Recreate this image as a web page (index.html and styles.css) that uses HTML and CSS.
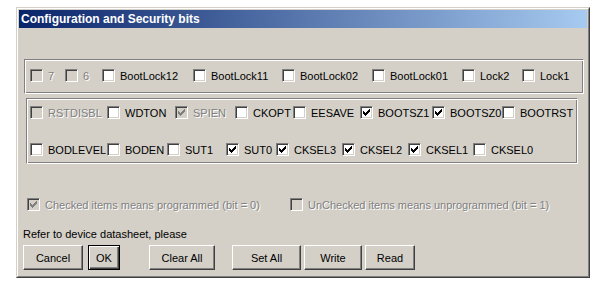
FILE: index.html
```html
<!DOCTYPE html>
<html lang="en">
<head>
    <meta charset="UTF-8">
    <title>Configuration and Security bits</title>
    <link rel="stylesheet" href="styles.css">
</head>
<body>
<div class="window">
  <div class="frame">
    <div class="titlebar">Configuration and Security bits</div>

    <div class="group lockbits">
        <div class="row">
            <label class="item w35 disabled"><span class="box"></span>7</label>
            <label class="item w37 disabled"><span class="box"></span>6</label>
            <label class="item w91"><span class="box"></span>BootLock12</label>
            <label class="item w89"><span class="box"></span>BootLock11</label>
            <label class="item w90"><span class="box"></span>BootLock02</label>
            <label class="item w90"><span class="box"></span>BootLock01</label>
            <label class="item w60"><span class="box"></span>Lock2</label>
            <label class="item"><span class="box"></span>Lock1</label>
        </div>
    </div>

    <div class="group fusebits">
        <div class="row">
            <label class="item w77 disabled"><span class="box"></span>RSTDISBL</label>
            <label class="item w68"><span class="box"></span>WDTON</label>
            <label class="item w60 disabled"><span class="box checked"><svg width="11" height="11" viewBox="0 0 11 11"><path d="M2 4h1v3H2zM3 5h1v3H3zM4 6h1v3H4zM5 5h1v3H5zM6 4h1v3H6zM7 3h1v3H7zM8 2h1v3H8z"/></svg></span>SPIEN</label>
            <label class="item w58"><span class="box"></span>CKOPT</label>
            <label class="item w67"><span class="box"></span>EESAVE</label>
            <label class="item w72"><span class="box checked"><svg width="11" height="11" viewBox="0 0 11 11"><path d="M2 4h1v3H2zM3 5h1v3H3zM4 6h1v3H4zM5 5h1v3H5zM6 4h1v3H6zM7 3h1v3H7zM8 2h1v3H8z"/></svg></span>BOOTSZ1</label>
            <label class="item w70"><span class="box checked"><svg width="11" height="11" viewBox="0 0 11 11"><path d="M2 4h1v3H2zM3 5h1v3H3zM4 6h1v3H4zM5 5h1v3H5zM6 4h1v3H6zM7 3h1v3H7zM8 2h1v3H8z"/></svg></span>BOOTSZ0</label>
            <label class="item"><span class="box"></span>BOOTRST</label>
        </div>
        <div class="row">
            <label class="item w77"><span class="box"></span>BODLEVEL</label>
            <label class="item w60"><span class="box"></span>BODEN</label>
            <label class="item w59"><span class="box"></span>SUT1</label>
            <label class="item w50"><span class="box checked"><svg width="11" height="11" viewBox="0 0 11 11"><path d="M2 4h1v3H2zM3 5h1v3H3zM4 6h1v3H4zM5 5h1v3H5zM6 4h1v3H6zM7 3h1v3H7zM8 2h1v3H8z"/></svg></span>SUT0</label>
            <label class="item w66"><span class="box checked"><svg width="11" height="11" viewBox="0 0 11 11"><path d="M2 4h1v3H2zM3 5h1v3H3zM4 6h1v3H4zM5 5h1v3H5zM6 4h1v3H6zM7 3h1v3H7zM8 2h1v3H8z"/></svg></span>CKSEL3</label>
            <label class="item w66"><span class="box checked"><svg width="11" height="11" viewBox="0 0 11 11"><path d="M2 4h1v3H2zM3 5h1v3H3zM4 6h1v3H4zM5 5h1v3H5zM6 4h1v3H6zM7 3h1v3H7zM8 2h1v3H8z"/></svg></span>CKSEL2</label>
            <label class="item w65"><span class="box checked"><svg width="11" height="11" viewBox="0 0 11 11"><path d="M2 4h1v3H2zM3 5h1v3H3zM4 6h1v3H4zM5 5h1v3H5zM6 4h1v3H6zM7 3h1v3H7zM8 2h1v3H8z"/></svg></span>CKSEL1</label>
            <label class="item"><span class="box"></span>CKSEL0</label>
        </div>
    </div>

    <div class="row legend">
        <label class="item w263 disabled"><span class="box checked"><svg width="11" height="11" viewBox="0 0 11 11"><path d="M2 4h1v3H2zM3 5h1v3H3zM4 6h1v3H4zM5 5h1v3H5zM6 4h1v3H6zM7 3h1v3H7zM8 2h1v3H8z"/></svg></span>Checked items means programmed (bit = 0)</label>
        <label class="item disabled"><span class="box"></span>UnChecked items means unprogrammed (bit = 1)</label>
    </div>

    <p class="note">Refer to device datasheet, please</p>

    <div class="buttons">
        <button class="btn cancel">Cancel</button>
        <button class="btn ok default">OK</button>
        <button class="btn clear">Clear All</button>
        <button class="btn setall">Set All</button>
        <button class="btn write">Write</button>
        <button class="btn read">Read</button>
    </div>
  </div>
</div>
</body>
</html>
```

FILE: styles.css
```css
body {
    margin: 0;
    background: #fff;
    font-family: "Liberation Sans", Arial, sans-serif;
    font-size: 11px;
    color: #000;
}
.window {
    margin: 7px 0 0 16px;
    width: 574px;
    height: 271px;
    box-sizing: border-box;
    border: 1px solid;
    border-color: #d4d0c8 #404040 #404040 #d4d0c8;
    background: #d4d0c8;
}
.frame {
    height: 100%;
    box-sizing: border-box;
    border: 1px solid;
    border-color: #fff #808080 #808080 #fff;
    padding: 1px;
}
.titlebar {
    height: 18px;
    line-height: 18px;
    padding-left: 2px;
    background: linear-gradient(to right, #0a246a, #a6caf0);
    color: #fff;
    font-weight: bold;
    font-size: 12px;
}
.group {
    box-sizing: border-box;
    border: 1px solid;
    border-color: #808080 #fff #fff #808080;
    box-shadow: inset 1px 1px #fff, inset -1px -1px #808080;
}
.lockbits {
    margin: 31px 0 0 5px;
    width: 560px;
    padding: 9px 5px 11px;
}
.fusebits {
    margin: 4px 0 0 7px;
    width: 552px;
    padding: 7px 3px;
    display: flex;
    flex-direction: column;
    gap: 24px;
}
.row {
    display: flex;
    align-items: center;
    height: 13px;
}
.item {
    display: flex;
    align-items: center;
    flex: none;
    white-space: nowrap;
}
.box {
    width: 13px;
    height: 13px;
    box-sizing: border-box;
    flex: none;
    margin-right: 5px;
    border: 1px solid;
    border-color: #808080 #fff #fff #808080;
    box-shadow: inset 1px 1px #404040, inset -1px -1px #d4d0c8;
    background: #fff;
}
.box svg {
    display: block;
    shape-rendering: crispEdges;
    fill: #000;
}
.disabled {
    color: #808080;
    text-shadow: 1px 1px #fff;
}
.disabled .box {
    background: #d4d0c8;
}
.disabled .box svg {
    fill: #808080;
}
.w35 { width: 35px; }
.w37 { width: 37px; }
.w50 { width: 50px; }
.w58 { width: 58px; }
.w59 { width: 59px; }
.w60 { width: 60px; }
.w65 { width: 65px; }
.w66 { width: 66px; }
.w67 { width: 67px; }
.w68 { width: 68px; }
.w70 { width: 70px; }
.w72 { width: 72px; }
.w77 { width: 77px; }
.w89 { width: 89px; }
.w90 { width: 90px; }
.w91 { width: 91px; }
.w263 { width: 263px; }
.legend {
    margin: 34px 0 0 8px;
}
.note {
    margin: 16px 0 0 4px;
    line-height: 14px;
}
.buttons {
    display: flex;
    margin: 4px 0 0 4px;
}
.btn {
    height: 25px;
    box-sizing: border-box;
    padding: 0;
    font-family: inherit;
    font-size: 11px;
    color: #000;
    background: #d4d0c8;
    border: 1px solid;
    border-color: #fff #404040 #404040 #fff;
    box-shadow: inset -1px -1px #808080;
}
.btn.default {
    border-color: #000;
    box-shadow: inset 1px 1px #fff, inset -1px -1px #404040, inset -2px -2px #808080;
}
.cancel { width: 60px; }
.ok { width: 32px; margin-left: 5px; }
.clear { width: 66px; margin-left: 29px; }
.setall { width: 69px; margin-left: 17px; }
.write { width: 58px; margin-left: 3px; }
.read { width: 50px; margin-left: 3px; }
```
